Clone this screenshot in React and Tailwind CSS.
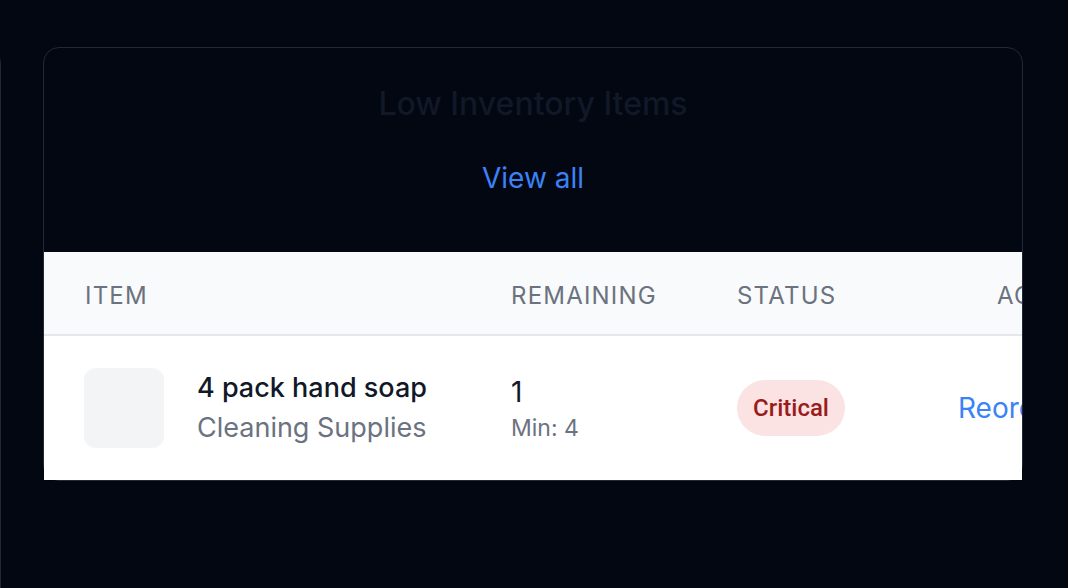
import React from "react";

const items = [
  {
    name: "4 pack hand soap",
    category: "Cleaning Supplies",
    remaining: 1,
    min: 4,
    status: "Critical",
  },
];

const LowInventoryCard = () => {
  return (
    <div className="w-[980px] shrink-0 self-start rounded-2xl border border-[#1f2937] bg-[#030712]">
      <div className="flex flex-col items-center pt-[28px] pb-[54px]">
        <h2 className="whitespace-nowrap text-[32px] leading-[56px] font-medium text-[#111827]">
          Low Inventory Items
        </h2>
        <a
          href="#"
          className="mt-[26px] text-[28px] leading-[40px] text-[#3b82f6]"
        >
          View all
        </a>
      </div>

      <div className="w-full overflow-hidden">
        <table className="w-[1160px] table-fixed border-collapse text-left whitespace-nowrap">
          <thead className="bg-[#f9fafb]">
            <tr className="border-b-2 border-[#e5e7eb]">
              <th className="w-[427px] px-[41px] pt-[28px] pb-[22px] text-[24px] leading-[32px] font-normal uppercase tracking-wider text-[#6b7280]">
                Item
              </th>
              <th className="w-[226px] px-[40px] pt-[28px] pb-[22px] text-[24px] leading-[32px] font-normal uppercase tracking-wider text-[#6b7280]">
                Remaining
              </th>
              <th className="w-[221px] px-[40px] pt-[28px] pb-[22px] text-[24px] leading-[32px] font-normal uppercase tracking-wider text-[#6b7280]">
                Status
              </th>
              <th className="pl-[79px] pt-[28px] pb-[22px] text-[24px] leading-[32px] font-normal uppercase tracking-wider text-[#6b7280]">
                Actions
              </th>
            </tr>
          </thead>
          <tbody className="bg-white">
            {items.map((item) => (
              <tr key={item.name}>
                <td className="px-[40px] py-[32px]">
                  <div className="flex items-center gap-[33px]">
                    <div className="h-[80px] w-[80px] shrink-0 rounded-[12px] bg-[#f3f4f6]" />
                    <div className="flex flex-col">
                      <span className="text-[27px] leading-[40px] font-medium text-[#111827]">
                        {item.name}
                      </span>
                      <span className="text-[27px] leading-[40px] text-[#6b7280]">
                        {item.category}
                      </span>
                    </div>
                  </div>
                </td>
                <td className="px-[40px] py-[32px]">
                  <div className="flex flex-col">
                    <span className="text-[28px] leading-[40px] text-[#111827]">
                      {item.remaining}
                    </span>
                    <span className="text-[23px] leading-[32px] text-[#6b7280]">
                      Min: {item.min}
                    </span>
                  </div>
                </td>
                <td className="px-[40px] py-[32px]">
                  <span className="inline-flex rounded-full bg-[#fbe3e3] px-[16px] py-[12px] font-['Roboto',sans-serif] text-[24px] leading-[32px] font-medium text-[#991b1b]">
                    {item.status}
                  </span>
                </td>
                <td className="px-[40px] py-[32px]">
                  <a
                    href="#"
                    className="text-[28px] leading-[40px] text-[#3b82f6]"
                  >
                    Reorder
                  </a>
                </td>
              </tr>
            ))}
          </tbody>
        </table>
      </div>
    </div>
  );
};

export default function App() {
  return (
    <div className="flex h-[588px] gap-[42px] overflow-hidden bg-[#030712] pt-[47px] font-['Inter',sans-serif]">
      {/* previous card, mostly off screen */}
      <div className="-ml-[399px] h-[700px] w-[400px] shrink-0 rounded-2xl border border-[#1f2937]" />
      <LowInventoryCard />
    </div>
  );
}
